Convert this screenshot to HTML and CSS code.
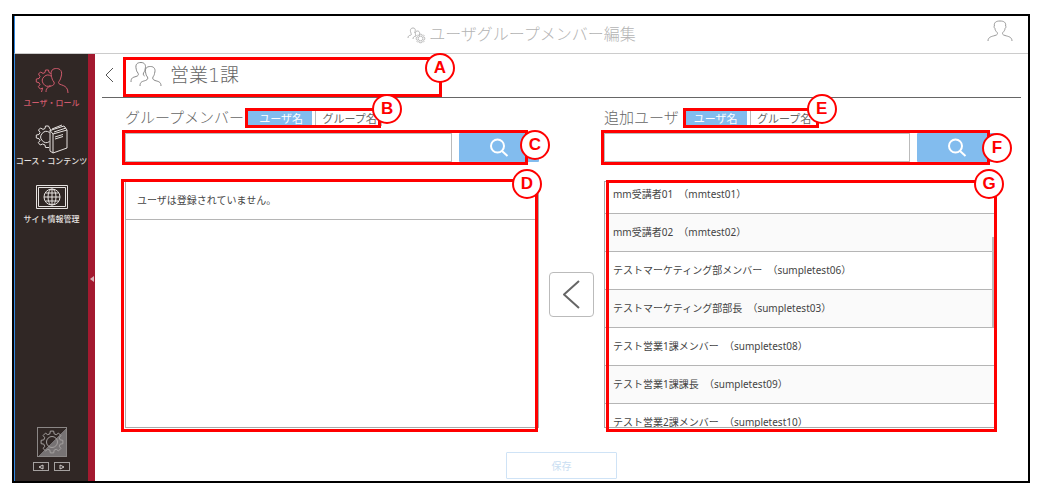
FILE: index.html
```html
<!DOCTYPE html>
<html lang="ja">
    <head>
        <meta charset="UTF-8" />
        <meta name="viewport" content="width=device-width, initial-scale=1.0" />
        <title>ユーザグループメンバー編集</title>
        <link rel="stylesheet" href="styles.css">
    </head>
    <body>
        <svg class="defs" aria-hidden="true">
            <symbol id="gear" viewBox="-12 -12 24 24">
                <path d="M8.2-2.1 10.9-1.7V1.7L8.2 2.1 7.3 4.3 8.9 6.5 6.5 8.9 4.3 7.3 2.1 8.2 1.7 10.9H-1.7L-2.1 8.2-4.3 7.3-6.5 8.9-8.9 6.5-7.3 4.3-8.2 2.1-10.9 1.7V-1.7L-8.2-2.1-7.3-4.3-8.9-6.5-6.5-8.9-4.3-7.3-2.1-8.2-1.7-10.9H1.7L2.1-8.2 4.3-7.3 6.5-8.9 8.9-6.5 7.3-4.3Z" />
                <circle r="5.5" />
            </symbol>
            <symbol id="person" viewBox="0 0 26 22">
                <path d="M1 21C1 17 4.500 16.500 8 15.500 10.500 14.800 10.800 14 10.200 12.500 8.500 11 8 9.500 7.900 8.300 6.800 7.500 7 6.500 7.400 6 6.800 2.500 9 1 13 1S19.200 2.500 18.600 6C19 6.500 19.200 7.500 18.100 8.300 18 9.500 17.500 11 15.800 12.500 15.200 14 15.500 14.800 18 15.500 21.500 16.500 25 17 25 21" />
            </symbol>
        </svg>

        <div class="frame">
            <header class="topbar">
                <h1 class="page-title">
                    <svg class="icon" width="20" height="18" viewBox="0 0 20 18" aria-hidden="true">
                        <path d="M1 12C1 10 2 9.500 4 9 5 8.500 4 8 4 7 3 5 3 2 6 2S8.500 5 7.500 7" />
                        <path d="M6 13C6 11 7 10.500 9 10 8 8 8 5 10.500 5S13 8 12 10" />
                        <use href="#gear" class="bold" x="8.500" y="7.500" width="10" height="10" />
                    </svg>
                    ユーザグループメンバー編集
                </h1>
                <a class="account" href="#" aria-label="アカウント">
                    <svg class="icon" width="26" height="22"><use href="#person" /></svg>
                </a>
            </header>

            <div class="body">
                <nav class="sidebar">
                    <a class="nav-item active" href="#">
                        <svg class="icon" width="36" height="30" viewBox="0 0 36 30" aria-hidden="true">
                            <path d="M17 7.500 15 6.500 14.500 4H11.500L11 6.500 9 7.400 6.500 6 4.500 8 6 10.500 5 12.500 2.300 13V16L5 16.700 6 18.700 4.300 20.700 6.300 23 8.600 22 7.500 26M17.500 10.500A5.500 5.500 0 1 0 16.500 19.500" />
                            <path d="M12 26C12 21 15 21 18.500 19.500 20.500 18.500 20.300 17.500 20 16 18 14 18 12 17.500 10.500 16 4 19 2.500 22.500 2.500S29 5 27 11C26.500 14 25 15 24.500 16.500 24.500 20 34 17.500 34 27" />
                        </svg>
                        <span>ユーザ・ロール</span>
                    </a>
                    <a class="nav-item" href="#">
                        <svg class="icon" width="36" height="30" viewBox="0 0 36 30" aria-hidden="true">
                            <path d="M17 6.500 15.500 4 14.500 2H11.500L11 4.500 9 5.400 6.500 4 4.500 6 6 8.500 5 10.500 2.300 11V14L5 14.700 6 16.700 4.300 18.700 6.300 21 8.600 20 11 21 11.500 23.500H15M15.500 8.500A5.500 5.500 0 1 0 15.500 17.500" />
                            <path d="M16 6.500V27L19 29 33 24V6L19 10 16 6.500 30 2 33 6M19 10V29M18 5 28 1M20 8 32 4M21 13 29 10.500M21 15 29 12.500" />
                        </svg>
                        <span>コース・コンテンツ</span>
                    </a>
                    <a class="nav-item" href="#">
                        <svg class="icon" width="36" height="30" viewBox="0 0 36 30" aria-hidden="true">
                            <rect x="2.500" y="3.500" width="31" height="23" />
                            <rect x="4.500" y="5.500" width="27" height="19" />
                            <circle cx="18" cy="15" r="8" />
                            <ellipse cx="18" cy="15" rx="4" ry="8" />
                            <path d="M10 15H26M18 7V23M11.500 11H24.500M11.500 19H24.500" />
                        </svg>
                        <span>サイト情報管理</span>
                    </a>

                    <div class="nav-footer">
                        <button class="settings" type="button" aria-label="設定">
                            <svg class="icon" width="24" height="24"><use href="#gear" /></svg>
                        </button>
                        <div class="pager">
                            <button type="button" aria-label="前へ">
                                <svg class="icon" width="8" height="6" viewBox="0 0 8 6"><path d="M6 1V5L2 3Z" /></svg>
                            </button>
                            <button type="button" aria-label="次へ">
                                <svg class="icon" width="8" height="6" viewBox="0 0 8 6"><path d="M2 1V5L6 3Z" /></svg>
                            </button>
                        </div>
                    </div>
                </nav>
                <button class="collapse" type="button" aria-label="メニューを閉じる">
                    <svg width="4" height="6" viewBox="0 0 4 6"><path d="M4 0V6L0 3Z" /></svg>
                </button>

                <main class="content">
                    <div class="title-row">
                        <a class="back" href="#" aria-label="戻る">
                            <svg class="icon" width="12" height="16" viewBox="0 0 12 16"><path d="M10 1 3 8 10 15" /></svg>
                        </a>
                        <h2 class="group-name">
                            <svg class="icon" width="32" height="28" viewBox="0 0 32 28" aria-hidden="true">
                                <path d="M1 21C1 16.500 3 16.500 6 15.500 9 14.500 8.500 13.500 8 12 6.500 10.500 6.500 9 6.200 8 5 3 7.500 1.500 11 1.500S16.500 4 15 8.500C15 10 14 11 13.500 12 13 13.500 13.500 14.500 14.500 15" />
                                <path d="M10 25C10 20.500 12.500 20.500 15.500 19.500 18 18.500 18 17.500 17.500 16 16 14.500 16 13 15.700 12 14.500 7 17 5.500 20.500 5.500S26 8 24.500 12.500C24.500 14 23.500 15 23 16 22.500 17.500 22.500 18.500 25 19.500 28 20.500 31 20.500 31 25" />
                            </svg>
                            営業1課
                            <span class="mark mark-a"><b class="badge">A</b></span>
                        </h2>
                    </div>

                    <div class="panels">
                        <section class="panel">
                            <div class="panel-head">
                                <h3>グループメンバー</h3>
                                <div class="tabs">
                                    <button class="tab selected" type="button">ユーザ名</button>
                                    <button class="tab" type="button">グループ名</button>
                                    <span class="mark mark-b"><b class="badge">B</b></span>
                                </div>
                            </div>
                            <form class="search">
                                <input type="text" aria-label="グループメンバー検索" />
                                <button type="button" aria-label="検索">
                                    <svg class="icon" width="20" height="20" viewBox="0 0 20 20"><circle cx="8.500" cy="8" r="6.500" /><path d="M13 13 18.500 18" /></svg>
                                </button>
                                <span class="mark mark-c"><b class="badge">C</b></span>
                            </form>
                            <div class="list-wrap">
                                <ul class="list members">
                                    <li>ユーザは登録されていません。</li>
                                </ul>
                                <span class="mark mark-d"><b class="badge">D</b></span>
                            </div>
                        </section>

                        <button class="move" type="button" aria-label="グループに追加">
                            <svg class="icon" width="20" height="32" viewBox="0 0 20 32"><path d="M17 2 2 15.500 17 29" /></svg>
                        </button>

                        <section class="panel">
                            <div class="panel-head">
                                <h3>追加ユーザ</h3>
                                <div class="tabs">
                                    <button class="tab selected" type="button">ユーザ名</button>
                                    <button class="tab" type="button">グループ名</button>
                                    <span class="mark mark-e"><b class="badge">E</b></span>
                                </div>
                            </div>
                            <form class="search">
                                <input type="text" aria-label="追加ユーザ検索" />
                                <button type="button" aria-label="検索">
                                    <svg class="icon" width="20" height="20" viewBox="0 0 20 20"><circle cx="8.500" cy="8" r="6.500" /><path d="M13 13 18.500 18" /></svg>
                                </button>
                                <span class="mark mark-f"><b class="badge">F</b></span>
                            </form>
                            <div class="list-wrap">
                                <ul class="list candidates">
                                    <li>mm受講者01&nbsp; （mmtest01）</li>
                                    <li>mm受講者02&nbsp; （mmtest02）</li>
                                    <li>テストマーケティング部メンバー&nbsp; （sumpletest06）</li>
                                    <li>テストマーケティング部部長&nbsp; （sumpletest03）</li>
                                    <li>テスト営業1課メンバー&nbsp; （sumpletest08）</li>
                                    <li>テスト営業1課課長&nbsp; （sumpletest09）</li>
                                    <li>テスト営業2課メンバー&nbsp; （sumpletest10）</li>
                                </ul>
                                <span class="thumb"></span>
                                <span class="mark mark-g"><b class="badge">G</b></span>
                            </div>
                        </section>
                    </div>

                    <button class="save" type="button" disabled>保存</button>
                </main>
            </div>
        </div>
    </body>
</html>
```

FILE: styles.css
```css
* {
    box-sizing: border-box;
}
body {
    margin: 14px 9px 10px 12px;
    background: #fff;
    color: #444;
    font-family: "DejaVu Sans", "Noto Sans CJK JP", sans-serif;
    font-size: 10px;
    line-height: 16px;
}
h1,
h2,
h3,
ul {
    margin: 0;
    padding: 0;
    font-weight: 300;
}
button,
input {
    margin: 0;
    padding: 0;
    font-family: inherit;
    font-size: 10px;
}
button {
    display: flex;
    align-items: center;
    justify-content: center;
}
a {
    color: inherit;
    text-decoration: none;
}
.defs {
    position: absolute;
    width: 0;
    height: 0;
}
.icon {
    display: block;
    flex: none;
    fill: none;
    stroke: currentColor;
    stroke-width: 1;
    stroke-linejoin: round;
}
.bold {
    stroke-width: 2;
}

/* frame and header */
.frame {
    border: 2px solid #000;
}
.topbar {
    position: relative;
    display: flex;
    align-items: center;
    justify-content: center;
    height: 38px;
    border-bottom: 1px solid #ccc;
    border-left: 1px solid #2f86e0;
}
.page-title {
    display: flex;
    align-items: center;
    gap: 2px;
    color: #b4b4b4;
    font-size: 16px;
}
.account {
    position: absolute;
    top: 4px;
    right: 15px;
    color: #999;
}
.body {
    display: flex;
    border-left: 1px solid #2f86e0;
}

/* sidebar */
.sidebar {
    display: flex;
    flex-direction: column;
    flex: none;
    width: 73px;
    padding: 12px 0 10px;
    background: #302725;
    color: #e6e2e0;
}
.nav-item {
    display: flex;
    flex-direction: column;
    align-items: center;
    height: 58px;
    font-size: 8px;
    font-weight: 500;
    line-height: 16px;
    white-space: nowrap;
}
.nav-item.active {
    color: #cf5a6c;
}
.nav-footer {
    display: flex;
    flex-direction: column;
    align-items: center;
    gap: 5px;
    margin-top: auto;
}
.settings {
    width: 30px;
    height: 30px;
    border: 1px solid #8b8786;
    background: linear-gradient(135deg, #302725 50%, #777374 50%);
    color: #a5a1a0;
}
.pager {
    display: flex;
    gap: 5px;
}
.pager button {
    width: 16px;
    height: 9px;
    border: 1px solid #a5a1a0;
    background: none;
    color: #d0cccb;
}
.collapse {
    flex: none;
    width: 7px;
    border: none;
    background: #a3192f;
    padding-top: 22px;
}
.collapse svg {
    fill: #d9b3b8;
}

/* content */
.content {
    flex: 1;
    min-width: 0;
    padding-bottom: 2px;
}
.title-row {
    display: flex;
    height: 44px;
    margin: 0 7px;
    border-bottom: 1px solid #666;
}
.back {
    width: 21px;
    padding: 13px 0 0 1px;
    color: #555;
}
.group-name {
    position: relative;
    display: flex;
    align-items: center;
    gap: 8px;
    width: 319px;
    padding: 0 0 1px 7px;
    color: #666;
    font-size: 19px;
}
.group-name .icon {
    color: #888;
}
.panels {
    display: grid;
    grid-template-columns: 414fr 45px 393fr;
    gap: 10px;
    padding: 10px 31px 0 30px;
}
.panel {
    min-width: 0;
}
.panel-head {
    display: flex;
    align-items: center;
    gap: 4px;
    height: 20px;
    margin-bottom: 5px;
}
.panel-head h3 {
    color: #666;
    font-size: 15px;
    white-space: nowrap;
}
.tabs {
    position: relative;
    display: flex;
    gap: 3px;
}
.tab {
    width: 67px;
    height: 16px;
    padding: 3px 0 0 2px;
    border: 1px solid #bbb;
    background: #fff;
    color: #666;
    font-size: 11px;
    line-height: 12px;
    white-space: nowrap;
}
.tab.selected {
    width: 64px;
    border-color: #82bcee;
    background: #82bcee;
    color: #fff;
}
.search {
    position: relative;
    display: flex;
    gap: 7px;
    height: 29px;
    margin-bottom: 19px;
}
.search input {
    flex: 1;
    min-width: 0;
    border: 1px solid #bbb;
    padding: 0 8px;
}
.search button {
    width: 80px;
    border: none;
    border-radius: 1px;
    background: #82bcee;
    color: #fff;
}
.search .icon {
    stroke-width: 2;
}
.list-wrap {
    position: relative;
}
.list {
    height: 247px;
    border: 1px solid #aaa;
    overflow: hidden;
    font-family: "Noto Sans", "Noto Sans CJK JP", sans-serif;
    list-style: none;
}
.list li {
    height: 38px;
    padding: 0 11px;
    border-bottom: 1px solid #b5b5b5;
    font-weight: 400;
    line-height: 37px;
    white-space: nowrap;
}
.list li:nth-child(even) {
    background: #fafafa;
}
.candidates li {
    padding: 0 8px;
}
/* list is scrolled down a little */
.candidates li:first-child {
    margin-top: -6px;
}
.thumb {
    position: absolute;
    top: 56px;
    right: 3px;
    width: 2px;
    height: 90px;
    background: #bbb;
}
.move {
    align-self: center;
    height: 45px;
    margin-top: 53px;
    border: 1px solid #bbb;
    border-radius: 4px;
    background: #fff;
    color: #666;
}
.move .icon {
    stroke-width: 2;
}
.save {
    width: 111px;
    height: 27px;
    margin: 24px auto 0;
    border: 1px solid #cfe3f6;
    border-radius: 1px;
    background: #fff;
    color: #c9def2;
}

/* red callouts */
.mark {
    position: absolute;
    border: 3px solid #f00;
    pointer-events: none;
}
.badge {
    position: absolute;
    z-index: 1;
    width: 30px;
    height: 30px;
    border: 2px solid #f00;
    border-radius: 50%;
    background: #fff;
    color: #f00;
    font: bold 17px/26px "Liberation Sans", Arial, sans-serif;
    text-align: center;
}
.mark-a {
    inset: 3px 0 0;
}
.mark-a .badge {
    top: -7px;
    right: -16px;
}
.mark-b {
    inset: -2px 1px -2px -3px;
}
.mark-b .badge {
    top: -17px;
    right: -24px;
}
.mark-c {
    inset: -3px 11px -3px -3px;
}
.mark-c .badge {
    top: -3px;
    right: -25px;
}
.mark-d {
    inset: -2px 1px -4px -4px;
}
.mark-d .badge {
    top: -13px;
    right: -7px;
}
.mark-e {
    inset: -2px -2px -2px 0;
}
.mark-e .badge {
    top: -17px;
    right: -21px;
}
.mark-f {
    inset: -3px 7px -3px -3px;
}
.mark-f .badge {
    top: 0;
    right: -25px;
}
.mark-g {
    inset: -1px 0 -4px 2px;
}
.mark-g .badge {
    top: -14px;
    right: -10px;
}
```
